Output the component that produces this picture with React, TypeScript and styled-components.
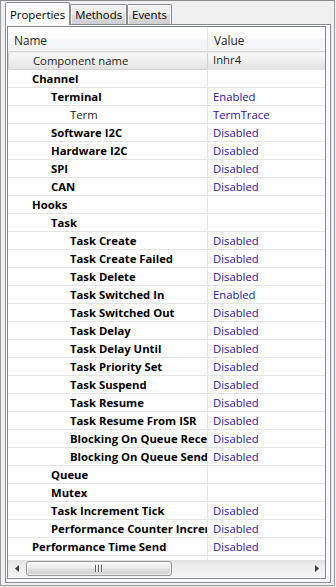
import React from "react";
import styled, { createGlobalStyle } from "styled-components";

const GlobalStyle = createGlobalStyle`
  html, body {
    margin: 0;
    padding: 0;
    background: #f0f0f0;
  }
  body {
    font-family: "Open Sans", "Noto Sans", "DejaVu Sans", sans-serif;
    font-size: 11.3px;
    color: #1a1a1a;
  }
  * { box-sizing: border-box; }
`;

const Window = styled.div`
  width: 335px;
  height: 586px;
  border: 1px solid #9a9a9a;
  border-top-color: #8a8a8a;
  background: #f0f0f0;
  padding: 1px 3px 2px 4px;
  display: flex;
  flex-direction: column;
`;

const TabStrip = styled.div`
  height: 22px;
  display: flex;
  align-items: flex-end;
`;

const Tab = styled.div<{ $active?: boolean }>`
  position: relative;
  z-index: 1;
  height: ${(p) => (p.$active ? 23 : 20)}px;
  margin-bottom: ${(p) => (p.$active ? -1 : 0)}px;
  padding: 0 4px;
  padding-top: ${(p) => (p.$active ? 1 : 0)}px;
  border: 1px solid #898c95;
  border-bottom: none;
  border-radius: 2px 2px 0 0;
  background: ${(p) =>
    p.$active
      ? "#ffffff"
      : "linear-gradient(to bottom, #f2f2f2 0%, #ebebeb 50%, #dddddd 51%, #cfcfcf 100%)"};
  box-shadow: ${(p) => (p.$active ? "none" : "inset 1px 1px 0 #ffffff, inset -1px 0 0 #f6f6f6")};
  display: flex;
  align-items: center;
  font-size: 11.4px;
  color: #000;
  white-space: nowrap;
`;

const Panel = styled.div`
  flex: 1;
  border: 1px solid #898c95;
  background: #fbfbfb;
  padding: 1px 4px 3px 1px;
  display: flex;
  flex-direction: column;
`;

const Grid = styled.div`
  flex: 1;
  border: 1px solid #828790;
  background: #ffffff;
  display: flex;
  flex-direction: column;
  overflow: hidden;
`;

const HeaderRow = styled.div`
  height: 25px;
  flex: none;
  display: flex;
  background: linear-gradient(to bottom, #ffffff 0%, #ffffff 45%, #f4f5f7 55%, #f3f4f6 100%);
  border-bottom: 1px solid #d5d5d5;
  box-shadow: 0 1px 0 #efefef;
  position: relative;
  z-index: 1;
`;

const HeaderCell = styled.div<{ $first?: boolean }>`
  ${(p) => (p.$first ? "width: 200px; border-right: 1px solid #e3e4e6;" : "flex: 1;")}
  padding: 1px 0 0 6px;
  display: flex;
  align-items: center;
  color: #1e1e1e;
  font-size: 11.8px;
`;

const Rows = styled.div`
  flex: 1;
  display: flex;
  flex-direction: column;
  overflow: hidden;
`;

const Row = styled.div<{ $selected?: boolean }>`
  height: 18px;
  flex: none;
  display: flex;
  border-bottom: 1px solid #e4e4e4;
  background: ${(p) =>
    p.$selected ? "linear-gradient(to bottom, #f8f8f8 0%, #efefef 50%, #e3e3e3 100%)" : "#ffffff"};
`;

const NameCell = styled.div<{ $level: number; $bold: boolean; $selected?: boolean }>`
  width: 200px;
  flex: none;
  border-right: 1px solid #e4e4e4;
  padding-left: ${(p) => 24 + p.$level * 19}px;
  padding-top: 1px;
  overflow: hidden;
  white-space: nowrap;
  line-height: 16px;
  font-weight: ${(p) => (p.$bold ? 700 : 400)};
  color: ${(p) => (p.$bold ? "#000000" : "#1e1e1e")};
  ${(p) =>
    p.$selected
      ? "border: 1px solid #d2d2d2; border-radius: 2px; line-height: 15px; padding-top: 0; margin-bottom: -1px;"
      : ""}
`;

const ValueCell = styled.div<{ $plain?: boolean }>`
  flex: 1;
  padding-left: 5px;
  padding-top: ${(p) => (p.$plain ? 0 : 1)}px;
  overflow: hidden;
  white-space: nowrap;
  line-height: 16px;
  color: ${(p) => (p.$plain ? "#1e1e1e" : "#2814a0")};
`;

const Filler = styled.div`
  flex: 1;
  display: flex;
`;

const FillerName = styled.div`
  width: 200px;
  border-right: 1px solid #e4e4e4;
`;

const ScrollBar = styled.div`
  height: 17px;
  flex: none;
  display: flex;
  background: linear-gradient(to bottom, #e2e2e2 0%, #ececec 30%, #f0f0f0 70%, #f4f4f4 100%);
  margin-bottom: 1px;
`;

const ArrowButton = styled.div`
  width: 17px;
  flex: none;
  display: flex;
  align-items: center;
  justify-content: center;
`;

const Track = styled.div`
  flex: 1;
  display: flex;
  align-items: center;
  padding-left: 1px;
`;

const Thumb = styled.div`
  width: 146px;
  height: 15px;
  border: 1px solid #979797;
  border-radius: 3px;
  background: linear-gradient(to bottom, #f5f5f5 0%, #ececec 45%, #dedede 55%, #d3d3d3 100%);
  box-shadow: inset 1px 1px 0 #fbfbfb, inset -1px -1px 0 #ececec;
  display: flex;
  align-items: center;
  justify-content: center;
  gap: 1px;
`;

const Grip = styled.div`
  width: 2px;
  height: 7px;
  border-left: 1px solid #5f5f5f;
  border-right: 1px solid #fafafa;
`;

type Item = { label: string; level: number; value?: string; bold?: boolean; selected?: boolean };

const items: Item[] = [
  { label: "Component name", level: 0, value: "Inhr4", bold: false, selected: true },
  { label: "Channel", level: 0 },
  { label: "Terminal", level: 1, value: "Enabled" },
  { label: "Term", level: 2, value: "TermTrace", bold: false },
  { label: "Software I2C", level: 1, value: "Disabled" },
  { label: "Hardware I2C", level: 1, value: "Disabled" },
  { label: "SPI", level: 1, value: "Disabled" },
  { label: "CAN", level: 1, value: "Disabled" },
  { label: "Hooks", level: 0 },
  { label: "Task", level: 1 },
  { label: "Task Create", level: 2, value: "Disabled" },
  { label: "Task Create Failed", level: 2, value: "Disabled" },
  { label: "Task Delete", level: 2, value: "Disabled" },
  { label: "Task Switched In", level: 2, value: "Enabled" },
  { label: "Task Switched Out", level: 2, value: "Disabled" },
  { label: "Task Delay", level: 2, value: "Disabled" },
  { label: "Task Delay Until", level: 2, value: "Disabled" },
  { label: "Task Priority Set", level: 2, value: "Disabled" },
  { label: "Task Suspend", level: 2, value: "Disabled" },
  { label: "Task Resume", level: 2, value: "Disabled" },
  { label: "Task Resume From ISR", level: 2, value: "Disabled" },
  { label: "Blocking On Queue Receive", level: 2, value: "Disabled" },
  { label: "Blocking On Queue Send", level: 2, value: "Disabled" },
  { label: "Queue", level: 1 },
  { label: "Mutex", level: 1 },
  { label: "Task Increment Tick", level: 1, value: "Disabled" },
  { label: "Performance Counter Increment", level: 1, value: "Disabled" },
  { label: "Performance Time Send", level: 0, value: "Disabled" },
];

const LeftArrow = () => (
  <svg width="4" height="7" viewBox="0 0 4 7">
    <path d="M4 0 L0 3.5 L4 7 Z" fill="#3c3c3c" />
  </svg>
);

const RightArrow = () => (
  <svg width="4" height="7" viewBox="0 0 4 7">
    <path d="M0 0 L4 3.5 L0 7 Z" fill="#3c3c3c" />
  </svg>
);

export default function App() {
  return (
    <>
      <GlobalStyle />
      <Window>
        <TabStrip>
          <Tab $active>Properties</Tab>
          <Tab>Methods</Tab>
          <Tab>Events</Tab>
        </TabStrip>
        <Panel>
          <Grid>
            <HeaderRow>
              <HeaderCell $first>Name</HeaderCell>
              <HeaderCell>Value</HeaderCell>
            </HeaderRow>
            <Rows>
              {items.map((it) => (
                <Row key={it.label} $selected={it.selected}>
                  <NameCell $level={it.level} $bold={it.bold !== false} $selected={it.selected}>
                    {it.label}
                  </NameCell>
                  <ValueCell $plain={it.selected}>{it.value ?? ""}</ValueCell>
                </Row>
              ))}
              <Filler>
                <FillerName />
              </Filler>
            </Rows>
            <ScrollBar>
              <ArrowButton>
                <LeftArrow />
              </ArrowButton>
              <Track>
                <Thumb>
                  <Grip />
                  <Grip />
                  <Grip />
                </Thumb>
              </Track>
              <ArrowButton>
                <RightArrow />
              </ArrowButton>
            </ScrollBar>
          </Grid>
        </Panel>
      </Window>
    </>
  );
}
